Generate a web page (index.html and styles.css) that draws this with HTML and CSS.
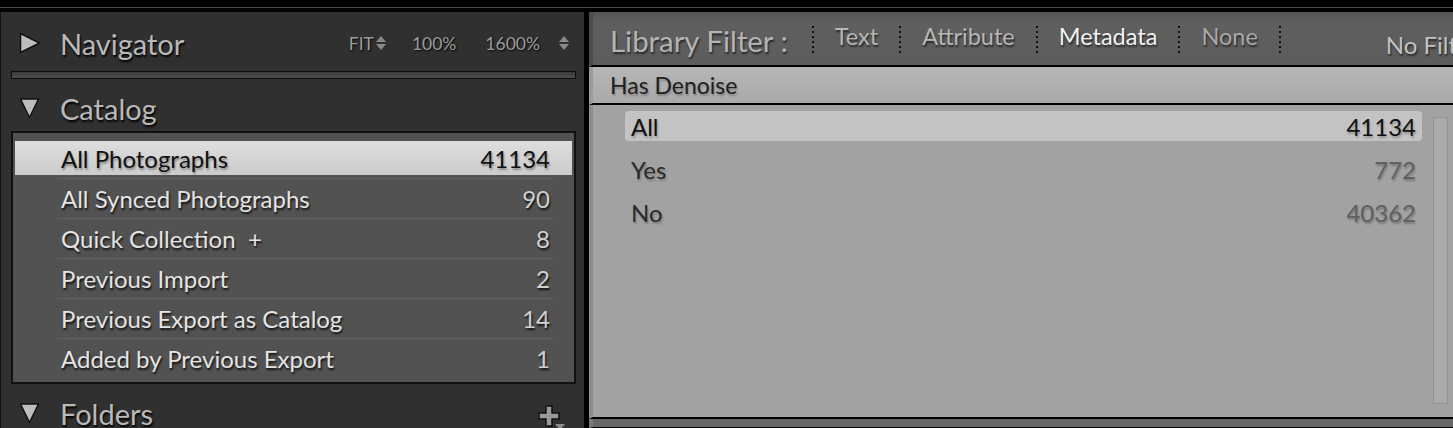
FILE: index.html
```html
<!DOCTYPE html>
<html>
<head>
<meta charset="utf-8">
<link rel="stylesheet" href="styles.css">
</head>
<body>
<div class="topbar"></div>
<div class="main">
  <aside class="left">
    <div class="panel-head nav-head">
      <svg class="tri" width="22" height="22" viewBox="0 0 22 22"><polygon points="1.5,1.5 20.5,11 1.5,20.5" /></svg>
      <span class="head-title">Navigator</span>
      <div class="zoom-opts">
        <span class="zopt">FIT<svg class="spin" width="12" height="16" viewBox="0 0 12 16"><polygon points="1,7 6,1 11,7"/><polygon points="1,9 11,9 6,15"/></svg></span>
        <span class="zopt">100%</span>
        <span class="zopt">1600%</span>
        <svg class="spin spin-last" width="12" height="16" viewBox="0 0 12 16"><polygon points="1,7 6,1 11,7"/><polygon points="1,9 11,9 6,15"/></svg>
      </div>
    </div>
    <div class="nav-bar"></div>
    <div class="panel-head cat-head">
      <svg class="tri" width="22" height="22" viewBox="0 0 22 22"><polygon points="1.5,2 19.5,2 10.5,20.5" /></svg>
      <span class="head-title">Catalog</span>
    </div>
    <div class="cat-box">
      <div class="cat-row sel"><div class="cat-inner"><span class="cat-name">All Photographs</span><span class="cat-count">41134</span></div></div>
      <div class="cat-row"><div class="cat-inner"><span class="cat-name">All Synced Photographs</span><span class="cat-count">90</span></div></div>
      <div class="cat-row"><div class="cat-inner"><span class="cat-name">Quick Collection&nbsp; +</span><span class="cat-count">8</span></div></div>
      <div class="cat-row"><div class="cat-inner"><span class="cat-name">Previous Import</span><span class="cat-count">2</span></div></div>
      <div class="cat-row"><div class="cat-inner"><span class="cat-name">Previous Export as Catalog</span><span class="cat-count">14</span></div></div>
      <div class="cat-row last"><div class="cat-inner"><span class="cat-name">Added by Previous Export</span><span class="cat-count">1</span></div></div>
    </div>
    <div class="panel-head folders-head">
      <svg class="tri" width="22" height="22" viewBox="0 0 22 22"><polygon points="1.5,2 19.5,2 10.5,20.5" /></svg>
      <span class="head-title">Folders</span>
      <svg class="plus" width="30" height="28" viewBox="0 0 30 28"><path d="M9 3h6v7h7v6h-7v7H9v-7H2v-6h7z"/><polygon class="plus-tri" points="18,21 28,21 23,27"/></svg>
    </div>
  </aside>
  <section class="right">
    <div class="filterbar">
      <span class="lf-title">Library Filter :</span>
      <span class="dots"></span>
      <span class="tab">Text</span>
      <span class="dots"></span>
      <span class="tab">Attribute</span>
      <span class="dots"></span>
      <span class="tab active">Metadata</span>
      <span class="dots"></span>
      <span class="tab none">None</span>
      <span class="dots"></span>
      <span class="nofilter">No Filter</span>
    </div>
    <div class="group-head">Has Denoise</div>
    <div class="list">
      <div class="rows">
        <div class="mrow sel"><span class="mname">All</span><span class="mcount">41134</span></div>
        <div class="mrow"><span class="mname">Yes</span><span class="mcount">772</span></div>
        <div class="mrow"><span class="mname">No</span><span class="mcount">40362</span></div>
      </div>
      <div class="scroll"></div>
    </div>
    <div class="bottombar"></div>
  </section>
</div>
</body>
</html>
```
FILE: styles.css
```css
* { box-sizing: border-box; }
html, body { margin: 0; padding: 0; }
body {
  width: 1453px;
  height: 428px;
  overflow: hidden;
  background: #000;
  font-family: Lato, "Open Sans", sans-serif;
}
.topbar {
  height: 12px;
  background: linear-gradient(#000 0 7px, #4a4a4a 7px 8px, #000 8px);
}
.main {
  display: flex;
  height: 416px;
}
.left {
  width: 584px;
  flex: none;
  background: #303030;
  border-left: 1px solid #141414;
  display: flex;
  flex-direction: column;
  overflow: hidden;
}
.panel-head {
  display: flex;
  align-items: center;
  padding-left: 18px;
  flex: none;
}
.tri { flex: none; }
.tri polygon { fill: #bdbdbd; stroke: #111; stroke-width: 1.5; stroke-linejoin: round; }
.head-title {
  margin-left: 19px;
  font-size: 29px;
  color: #b9b9b9;
  text-shadow: 1px 2px 2px #000;
}
.nav-head { height: 59px; padding-top: 3px; }
.zoom-opts {
  margin-left: auto;
  margin-right: 14px;
  display: flex;
  align-items: center;
  font-size: 17.5px;
  color: #9c9c9c;
  text-shadow: 1px 1px 2px #000;
}
.zopt { display: flex; align-items: center; margin-right: 29px; }
.zopt:first-child { margin-right: 25px; }
.zopt:nth-child(3) { margin-right: 17px; }
.spin polygon { fill: #8a8a8a; }
.spin { margin-left: 1px; }
.nav-bar {
  height: 8px;
  margin: 0 8px 0 10px;
  border: 1px solid #0c0c0c;
  background: linear-gradient(#3a3a3a, #4d4d4d);
  flex: none;
}
.cat-head { height: 52px; padding-top: 6px; }
.cat-box {
  margin: 0 8px 0 10px;
  border: 2px solid #111;
  background: #525252;
  padding: 6px 2px 3px;
  flex: none;
}
.cat-row { height: 40px; }
.cat-row.sel {
  background: linear-gradient(#dedede, #cbcbcb) no-repeat;
  background-size: 100% 34px;
  background-position: 0 2px;
}
.cat-inner {
  height: 40px;
  margin: 0 18px 0 43px;
  border-bottom: 1px solid #626262;
  display: flex;
  align-items: center;
  justify-content: space-between;
  padding: 0 4px 0 3px;
  font-size: 24px;
  color: #e4e4e4;
  text-shadow: 1px 2px 2px rgba(0,0,0,0.8);
}
.cat-row.last .cat-inner { border-bottom-color: transparent; }
.cat-count { color: #d0d0d0; }
.cat-row.sel .cat-inner { color: #111; text-shadow: 1px 2px 2px rgba(0,0,0,0.35); }
.cat-row.sel .cat-count { color: #111; }
.folders-head { height: 58px; }
.plus { margin-left: auto; margin-right: 17px; margin-top: 8px; }
.plus path { fill: #9a9a9a; stroke: #111; stroke-width: 1.5; }
.plus .plus-tri { fill: #8a8a8a; }

.right {
  flex: 1;
  margin-left: 5px;
  display: flex;
  flex-direction: column;
  overflow: hidden;
}
.filterbar {
  height: 55px;
  flex: none;
  display: flex;
  align-items: center;
  gap: 21px;
  padding-left: 17px;
  border-left: 4px solid #4c4c4c;
  border-bottom: 2px solid #000;
  background: linear-gradient(#545454, #5f5f5f 20%, #5d5d5d);
  white-space: nowrap;
  overflow: hidden;
  text-shadow: 1px 2px 2px rgba(0,0,0,0.6);
}
.lf-title {
  font-size: 29.4px;
  color: #b4b4b4;
  margin-top: 4px;
  margin-right: 3px;
}
.dots {
  width: 2px;
  height: 27px;
  flex: none;
  margin-top: 2px;
  background: repeating-linear-gradient(to bottom, #111 0 2px, transparent 2px 5px);
}
.tab {
  font-size: 23.5px;
  color: #b6b6b6;
  margin-bottom: 6px;
}
.tab.active { color: #f2f2f2; }
.tab.none { color: #a8a8a8; }
.nofilter {
  font-size: 24px;
  color: #c2c2c2;
  margin-left: 84px;
  margin-top: 12px;
}
.group-head {
  height: 38px;
  flex: none;
  display: flex;
  align-items: center;
  padding-left: 17px;
  border-left: 4px solid #9b9b9b;
  border-bottom: 2px solid #000;
  background: linear-gradient(#b6b6b6, #a9a9a9);
  font-size: 23px;
  color: #1e1e1e;
  text-shadow: 1px 2px 2px rgba(0,0,0,0.25);
}
.list {
  flex: 1;
  display: flex;
  padding: 6px 5px 13px 32px;
  border-left: 4px solid #8c8c8c;
  border-bottom: 2px solid #000;
  background: #a2a2a2;
}
.rows {
  flex: 1;
  display: flex;
  flex-direction: column;
  gap: 13px;
}
.mrow {
  height: 30px;
  display: flex;
  align-items: center;
  justify-content: space-between;
  padding: 0 6px;
  border-radius: 4px;
  font-size: 24px;
  color: #2a2a2a;
  text-shadow: 1px 2px 2px rgba(0,0,0,0.25);
}
.mrow.sel { background: #c3c3c3; color: #111; }
.mcount { color: #606060; }
.mrow.sel .mcount { color: #111; }
.scroll {
  width: 15px;
  margin-left: 11px;
  margin-top: 6px;
  background: #ababab;
  border: 1px solid #949494;
}
.bottombar {
  height: 9px;
  flex: none;
  background: #686868;
  border-left: 4px solid #7a7a7a;
  border-bottom: 1px solid #000;
}
```
